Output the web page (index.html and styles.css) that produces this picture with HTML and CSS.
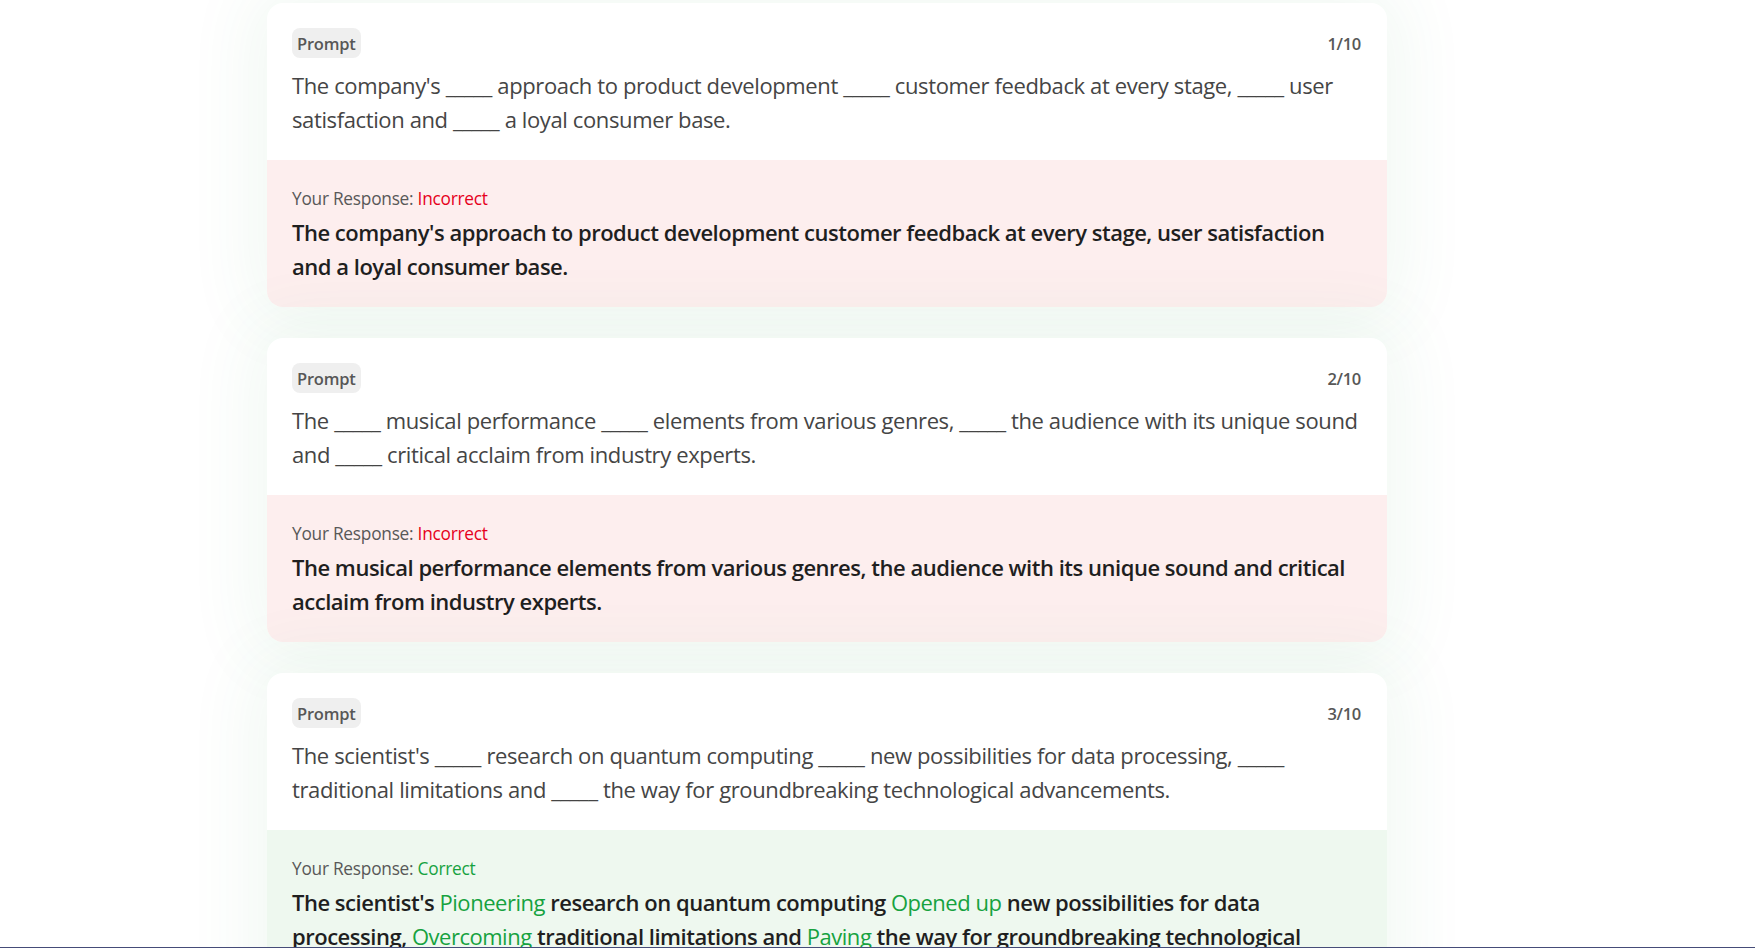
FILE: index.html
```html
<!DOCTYPE html>
<html lang="en">
<head>
<meta charset="utf-8">
<title>Results</title>
<link rel="stylesheet" href="styles.css">
</head>
<body>
<main class="list">
  <section class="card">
    <div class="prompt">
      <div class="prompt-head">
        <span class="badge">Prompt</span>
        <span class="count">1/10</span>
      </div>
      <p class="prompt-text">The company's _____ approach to product development _____ customer feedback at every stage, _____ user satisfaction and _____ a loyal consumer base.</p>
    </div>
    <div class="response incorrect">
      <div class="label">Your Response: <span class="verdict">Incorrect</span></div>
      <p class="answer">The company's approach to product development customer feedback at every stage, user satisfaction and a loyal consumer base.</p>
    </div>
  </section>

  <section class="card">
    <div class="prompt">
      <div class="prompt-head">
        <span class="badge">Prompt</span>
        <span class="count">2/10</span>
      </div>
      <p class="prompt-text">The _____ musical performance _____ elements from various genres, _____ the audience with its unique sound and _____ critical acclaim from industry experts.</p>
    </div>
    <div class="response incorrect">
      <div class="label">Your Response: <span class="verdict">Incorrect</span></div>
      <p class="answer">The musical performance elements from various genres, the audience with its unique sound and critical acclaim from industry experts.</p>
    </div>
  </section>

  <section class="card">
    <div class="prompt">
      <div class="prompt-head">
        <span class="badge">Prompt</span>
        <span class="count">3/10</span>
      </div>
      <p class="prompt-text">The scientist's _____ research on quantum computing _____ new possibilities for data processing, _____ traditional limitations and _____ the way for groundbreaking technological advancements.</p>
    </div>
    <div class="response correct">
      <div class="label">Your Response: <span class="verdict">Correct</span></div>
      <p class="answer">The scientist's <span class="fill">Pioneering</span> research on quantum computing <span class="fill">Opened up</span> new possibilities for data processing, <span class="fill">Overcoming</span> traditional limitations and <span class="fill">Paving</span> the way for groundbreaking technological advancements.</p>
    </div>
  </section>
</main>
<div class="frame-edge"></div>
</body>
</html>
```
FILE: styles.css
```css
* { box-sizing: border-box; }

html, body {
  margin: 0;
  padding: 0;
  background: #ffffff;
  font-family: "Open Sans", "Noto Sans", sans-serif;
  color: #474747;
}

body {
  overflow: hidden;
  height: 948px;
}

.list {
  margin-left: 267px;
  width: 1120px;
  padding-top: 3px;
  display: flex;
  flex-direction: column;
  gap: 31px;
}

.card {
  background: #ffffff;
  border-radius: 16px;
  overflow: hidden;
  box-shadow: 0 0 70px 14px rgba(60, 150, 80, 0.07);
}

.prompt {
  padding: 25px 25px 24px 25px;
}

.prompt-head {
  display: flex;
  justify-content: space-between;
  align-items: center;
}

.badge {
  display: inline-flex;
  align-items: center;
  height: 30px;
  padding: 0 5px;
  border-radius: 8px;
  background: #efefef;
  color: #575757;
  font-size: 16.5px;
  font-weight: 600;
  letter-spacing: -0.2px;
}

.count {
  color: #575757;
  font-size: 16.5px;
  font-weight: 600;
  letter-spacing: -0.3px;
  padding-right: 1px;
}

.prompt-text {
  margin: 10px 0 0 0;
  font-size: 22px;
  line-height: 34px;
  color: #454545;
  letter-spacing: -0.38px;
}

.response {
  padding: 25px 25px 24px 25px;
}

.response.incorrect { background: #fdeeee; }
.response.correct { background: #eef8ef; }

.label {
  font-size: 17.3px;
  line-height: 27px;
  color: #585858;
  letter-spacing: -0.25px;
}

.incorrect .verdict { color: #e6001c; }
.correct .verdict { color: #16a23f; }

.answer {
  margin: 3px 0 0 0;
  font-size: 22px;
  line-height: 34px;
  font-weight: 600;
  color: #1f1f1f;
  letter-spacing: -0.48px;
}

.answer .fill {
  color: #16a23f;
  font-weight: 500;
}

.frame-edge {
  position: fixed;
  left: 0;
  right: 0;
  bottom: 0;
  height: 1px;
  background: #454c78;
}
```
